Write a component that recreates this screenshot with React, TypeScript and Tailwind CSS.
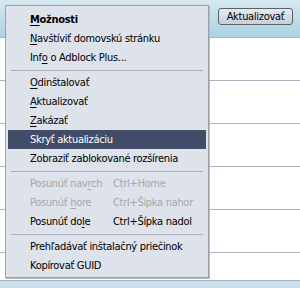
type Item =
  | { kind: "sep" }
  | {
      kind: "item";
      pre: string;
      key?: string;
      post?: string;
      shortcut?: string;
      bold?: boolean;
      disabled?: boolean;
      active?: boolean;
    };

const items: Item[] = [
  { kind: "item", pre: "", key: "M", post: "ožnosti", bold: true },
  { kind: "item", pre: "", key: "N", post: "avštíviť domovskú stránku" },
  { kind: "item", pre: "Inf", key: "o", post: " o Adblock Plus..." },
  { kind: "sep" },
  { kind: "item", pre: "", key: "O", post: "dinštalovať" },
  { kind: "item", pre: "", key: "A", post: "ktualizovať" },
  { kind: "item", pre: "", key: "Z", post: "akázať" },
  { kind: "item", pre: "Skryť aktualizáciu", active: true },
  { kind: "item", pre: "Zobraziť zablokované rozšírenia" },
  { kind: "sep" },
  { kind: "item", pre: "Posunúť nav", key: "r", post: "ch", shortcut: "Ctrl+Home", disabled: true },
  { kind: "item", pre: "Posunúť ", key: "h", post: "ore", shortcut: "Ctrl+Šípka nahor", disabled: true },
  { kind: "item", pre: "Posunúť do", key: "l", post: "e", shortcut: "Ctrl+Šípka nadol" },
  { kind: "sep" },
  { kind: "item", pre: "Prehľadávať inštalačný priečinok" },
  { kind: "item", pre: "Kopírovať GUID" },
];

function MenuRow({ item }: { item: Item }) {
  if (item.kind === "sep") {
    return (
      <div className="h-[6px] pt-[3px] px-[3px]">
        <div className="h-px bg-[#a9b0bb]" />
      </div>
    );
  }
  const color = item.active
    ? "bg-[#414c69] text-white"
    : item.disabled
    ? "text-[#a4a7ac]"
    : "text-black";
  const label = (
    <span>
      {item.pre}
      {item.key && <span className="underline underline-offset-[2px]">{item.key}</span>}
      {item.post}
    </span>
  );
  return (
    <div className={`h-[19px] flex items-center pl-[22px] whitespace-nowrap ${color} ${item.bold ? "font-bold" : ""}`}>
      {item.shortcut ? (
        <>
          <div className="w-[83px]">{label}</div>
          <div>{item.shortcut}</div>
        </>
      ) : (
        label
      )}
    </div>
  );
}

export default function App() {
  return (
    <div
      className="relative w-[300px] h-[288px] overflow-hidden bg-white text-[11px] leading-none tracking-[-0.3px]"
      style={{ fontFamily: '"DejaVu Sans Condensed", "Liberation Sans", Arial, sans-serif' }}
    >
      <div className="h-[37px] bg-gradient-to-b from-[#d4e8ef] to-[#a9d4e3] flex justify-end items-start pt-[8px] pr-[7px]">
        <button className="w-[75px] h-[17px] rounded-[3px] border border-[#5b5f66] bg-gradient-to-b from-[#e6eaf0] to-[#c8ced8] text-black text-[11px] leading-none tracking-[-0.3px]">
          Aktualizovať
        </button>
      </div>
      <div className="h-[43px] border-t border-[#aab3c0]" />
      <div className="h-[43px] border-t border-[#aab3c0]" />
      <div className="h-[43px] border-t border-[#aab3c0]" />
      <div className="h-[43px] border-t border-[#aab3c0]" />
      <div className="h-[43px] border-t border-[#aab3c0]" />
      <div className="h-[28px] border-t border-[#aab3c0]" />
      <div className="h-[8px] border-t border-[#a9b0b8] bg-[#c9dfe9]" />

      <div className="absolute left-[5px] top-[5px] w-[204px] border border-[#9ba1aa] bg-[#dde2eb] pt-[4px] pb-[2px] px-[2px] shadow-[1px_1px_0_#b5bac2]">
        {items.map((it, i) => (
          <MenuRow key={i} item={it} />
        ))}
      </div>
    </div>
  );
}
